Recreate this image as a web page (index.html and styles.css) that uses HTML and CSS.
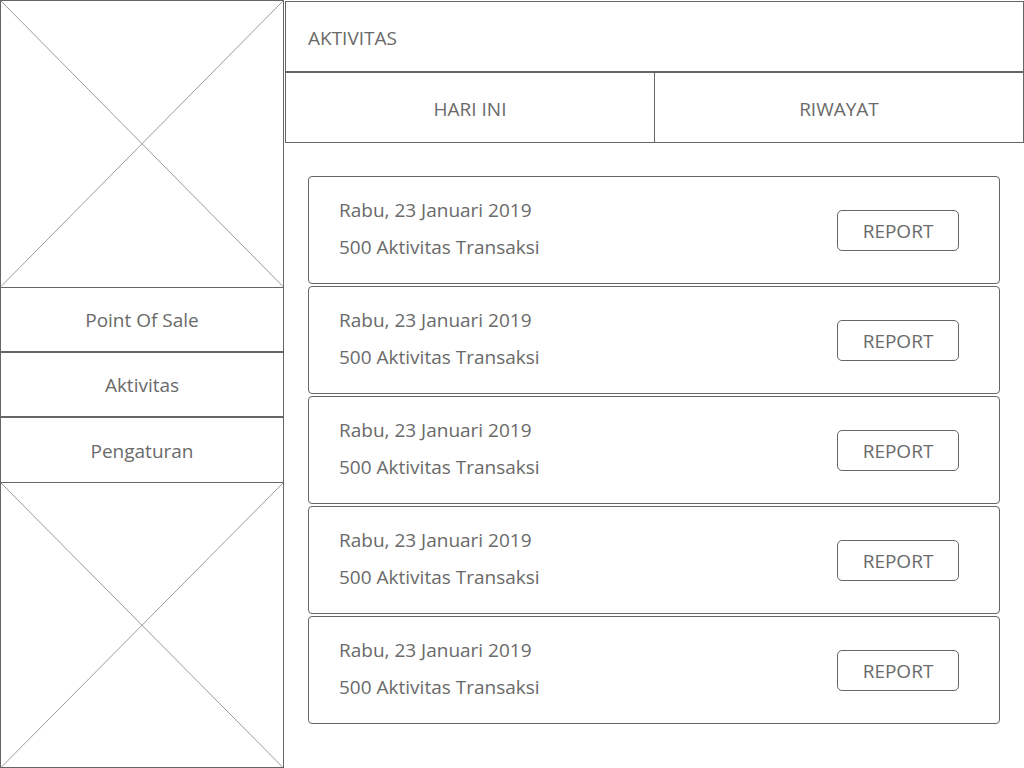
FILE: index.html
```html
<!DOCTYPE html>
<html>
<head>
<meta charset="utf-8">
<link rel="stylesheet" href="styles.css">
</head>
<body>
<div class="app">
  <aside class="sidebar">
    <div class="placeholder top">
      <svg viewBox="0 0 100 100" preserveAspectRatio="none"><line x1="0" y1="0" x2="100" y2="100" vector-effect="non-scaling-stroke"/><line x1="100" y1="0" x2="0" y2="100" vector-effect="non-scaling-stroke"/></svg>
    </div>
    <nav class="menu">
      <div class="menu-item">Point Of Sale</div>
      <div class="menu-item">Aktivitas</div>
      <div class="menu-item">Pengaturan</div>
    </nav>
    <div class="placeholder bottom">
      <svg viewBox="0 0 100 100" preserveAspectRatio="none"><line x1="0" y1="0" x2="100" y2="100" vector-effect="non-scaling-stroke"/><line x1="100" y1="0" x2="0" y2="100" vector-effect="non-scaling-stroke"/></svg>
    </div>
  </aside>
  <main class="main">
    <header class="header">AKTIVITAS</header>
    <div class="tabs">
      <div class="tab">HARI INI</div>
      <div class="tab">RIWAYAT</div>
    </div>
    <section class="list">
      <div class="card">
        <div class="info"><div>Rabu, 23 Januari 2019</div><div>500 Aktivitas Transaksi</div></div>
        <button class="btn">REPORT</button>
      </div>
      <div class="card">
        <div class="info"><div>Rabu, 23 Januari 2019</div><div>500 Aktivitas Transaksi</div></div>
        <button class="btn">REPORT</button>
      </div>
      <div class="card">
        <div class="info"><div>Rabu, 23 Januari 2019</div><div>500 Aktivitas Transaksi</div></div>
        <button class="btn">REPORT</button>
      </div>
      <div class="card">
        <div class="info"><div>Rabu, 23 Januari 2019</div><div>500 Aktivitas Transaksi</div></div>
        <button class="btn">REPORT</button>
      </div>
      <div class="card">
        <div class="info"><div>Rabu, 23 Januari 2019</div><div>500 Aktivitas Transaksi</div></div>
        <button class="btn">REPORT</button>
      </div>
    </section>
  </main>
</div>
</body>
</html>
```

FILE: styles.css
```css
* { box-sizing: border-box; }
html, body { margin: 0; padding: 0; background: #fff; }
body {
  font-family: "Open Sans", "Noto Sans", sans-serif;
  font-size: 19px;
  color: #6a6a6a;
  width: 1024px;
  height: 768px;
  overflow: hidden;
}
.app { display: flex; height: 768px; }
.sidebar { width: 284px; display: flex; flex-direction: column; flex: none; }
.placeholder { border: 1px solid #666; position: relative; }
.placeholder svg { display: block; width: 100%; height: 100%; }
.placeholder line { stroke: #9a9a9a; stroke-width: 1; }
.placeholder.top { height: 288px; }
.placeholder.bottom { height: 286px; border-top: none; }
.menu { display: flex; flex-direction: column; }
.menu-item {
  height: 65px;
  border: 1px solid #666;
  border-top: none;
  border-bottom-width: 2px;
  display: flex; align-items: center; justify-content: center;
  padding-top: 2px;
}
.menu-item:last-child { border-bottom-width: 1px; }
.main { flex: 1; padding-left: 1px; padding-top: 1px; display: flex; flex-direction: column; }
.header {
  height: 72px;
  border: 1px solid #666;
  border-bottom-width: 2px;
  display: flex; align-items: center;
  padding-left: 22px;
  padding-top: 2px;
}
.tabs { display: flex; height: 70px; border: 1px solid #666; border-top: none; }
.tab { flex: 1; display: flex; align-items: center; justify-content: center; padding-top: 2px; }
.tab:first-child { border-right: 1px solid #666; flex: 0 0 369px; }
.list { padding: 33px 24px 0 23px; display: flex; flex-direction: column; gap: 2px; }
.card {
  height: 108px;
  border: 1px solid #666;
  border-radius: 4px;
  display: flex; align-items: center; justify-content: space-between;
  padding: 0 40px 0 30px;
}
.info { line-height: 37px; margin-top: -2px; }
.btn {
  width: 122px; height: 41px;
  border: 1px solid #666;
  border-radius: 5px;
  background: #fff;
  font: inherit;
  color: #6a6a6a;
  padding: 1px 0 0;
}
```
